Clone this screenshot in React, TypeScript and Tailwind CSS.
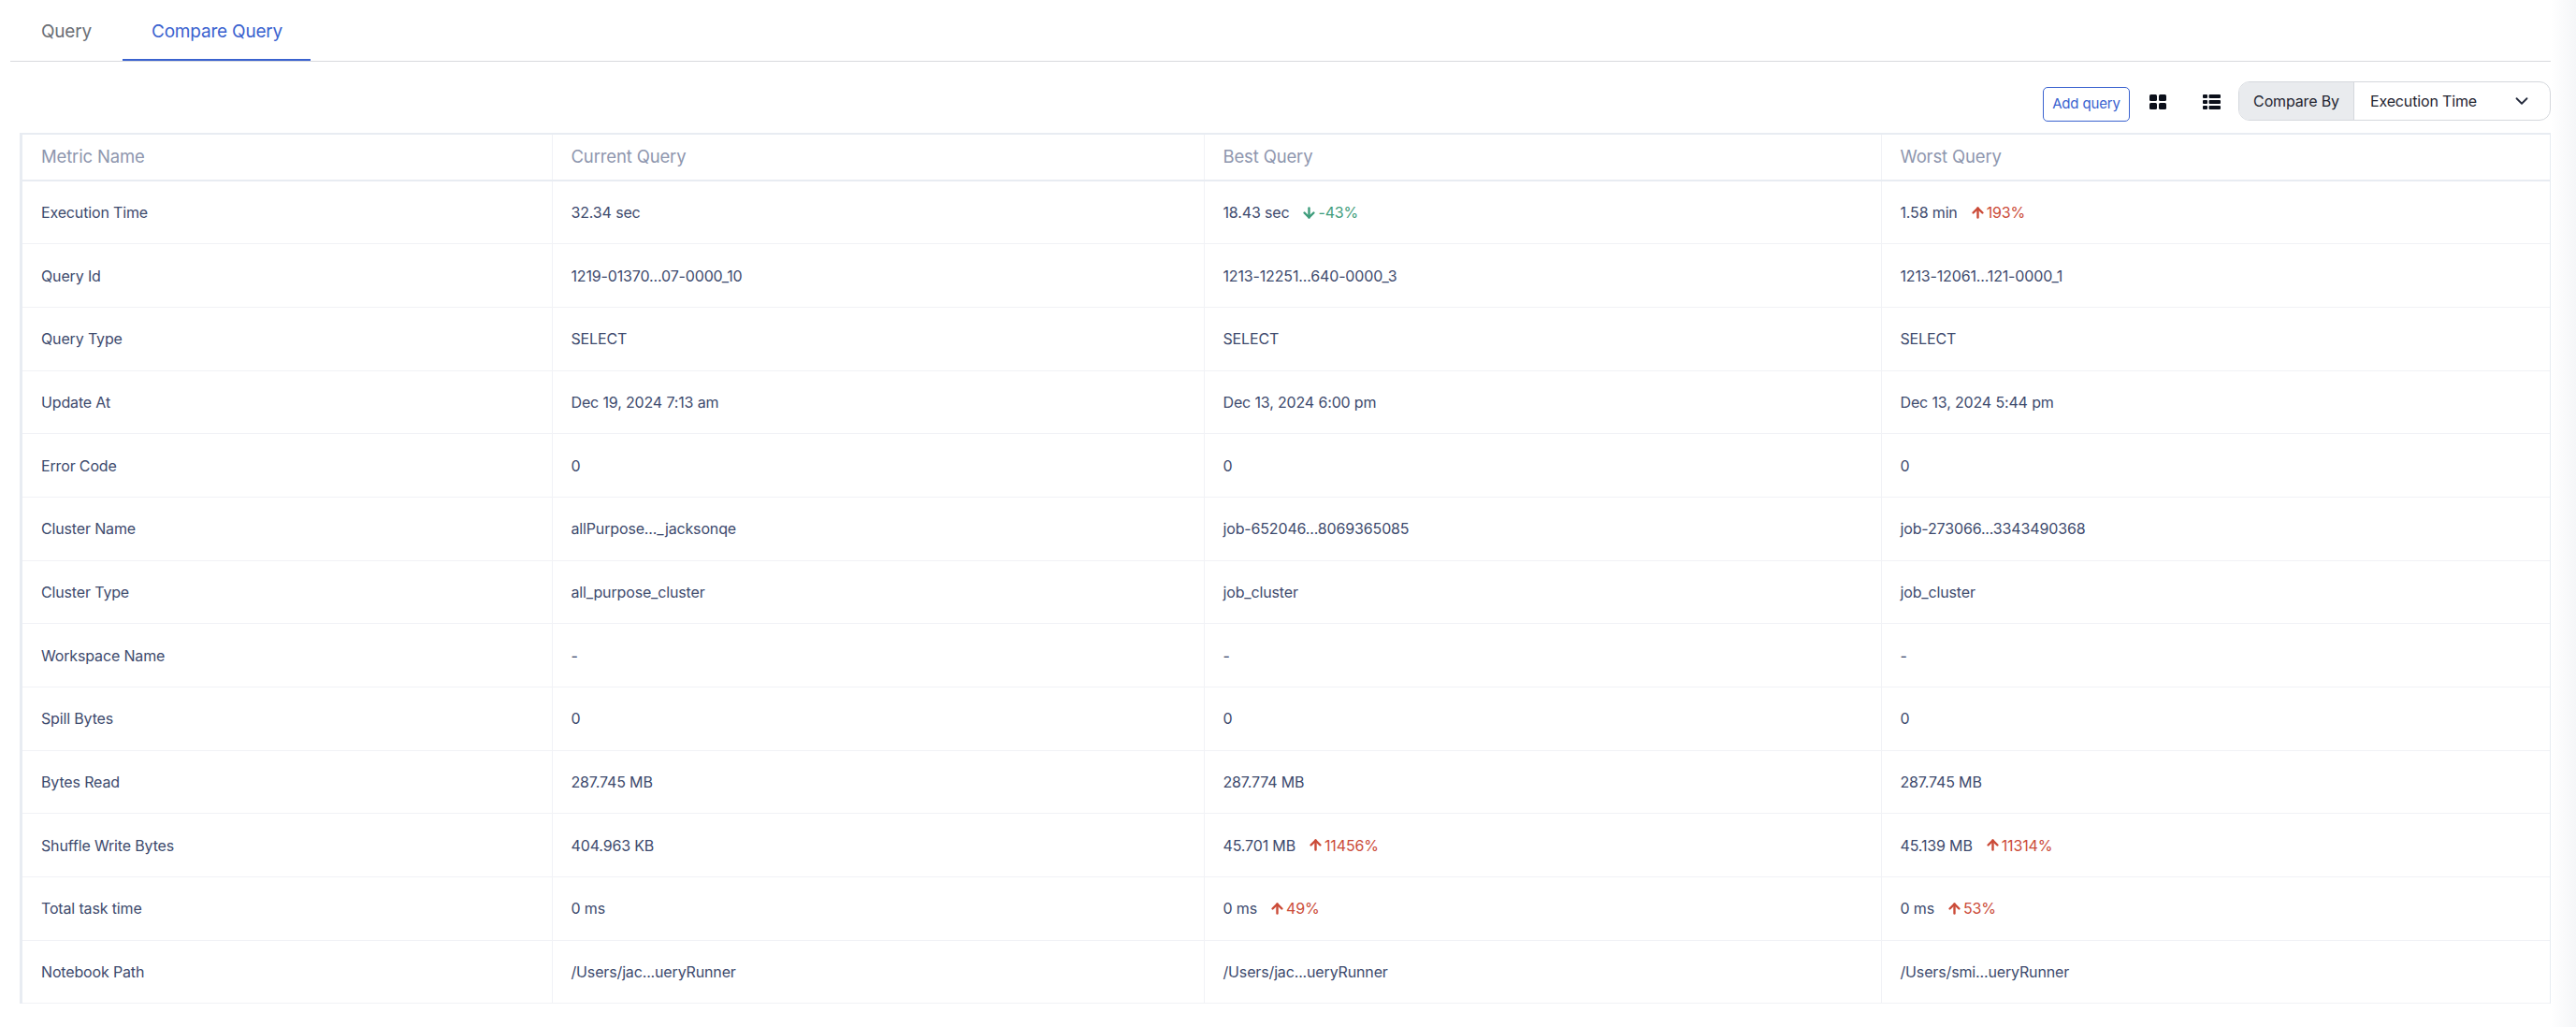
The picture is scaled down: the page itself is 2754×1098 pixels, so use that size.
import React from 'react';
import { ArrowDown, ArrowUp, ChevronDown } from 'lucide-react';

type Delta = { dir: 'up' | 'down'; text: string };
type Cell = { value: string; delta?: Delta };
type Row = { name: string; current: string; best: Cell; worst: Cell };

const rows: Row[] = [
  { name: 'Execution Time', current: '32.34 sec', best: { value: '18.43 sec', delta: { dir: 'down', text: '-43%' } }, worst: { value: '1.58 min', delta: { dir: 'up', text: '193%' } } },
  { name: 'Query Id', current: '1219-01370...07-0000_10', best: { value: '1213-12251...640-0000_3' }, worst: { value: '1213-12061...121-0000_1' } },
  { name: 'Query Type', current: 'SELECT', best: { value: 'SELECT' }, worst: { value: 'SELECT' } },
  { name: 'Update At', current: 'Dec 19, 2024 7:13 am', best: { value: 'Dec 13, 2024 6:00 pm' }, worst: { value: 'Dec 13, 2024 5:44 pm' } },
  { name: 'Error Code', current: '0', best: { value: '0' }, worst: { value: '0' } },
  { name: 'Cluster Name', current: 'allPurpose..._jacksonqe', best: { value: 'job-652046...8069365085' }, worst: { value: 'job-273066...3343490368' } },
  { name: 'Cluster Type', current: 'all_purpose_cluster', best: { value: 'job_cluster' }, worst: { value: 'job_cluster' } },
  { name: 'Workspace Name', current: '-', best: { value: '-' }, worst: { value: '-' } },
  { name: 'Spill Bytes', current: '0', best: { value: '0' }, worst: { value: '0' } },
  { name: 'Bytes Read', current: '287.745 MB', best: { value: '287.774 MB' }, worst: { value: '287.745 MB' } },
  { name: 'Shuffle Write Bytes', current: '404.963 KB', best: { value: '45.701 MB', delta: { dir: 'up', text: '11456%' } }, worst: { value: '45.139 MB', delta: { dir: 'up', text: '11314%' } } },
  { name: 'Total task time', current: '0 ms', best: { value: '0 ms', delta: { dir: 'up', text: '49%' } }, worst: { value: '0 ms', delta: { dir: 'up', text: '53%' } } },
  { name: 'Notebook Path', current: '/Users/jac...ueryRunner', best: { value: '/Users/jac...ueryRunner' }, worst: { value: '/Users/smi...ueryRunner' } },
];

const GridIcon = () => (
  <svg width="18" height="16" viewBox="0 0 18 16" fill="#0b0f1a">
    <rect x="0" y="0" width="8" height="7" rx="1.5" />
    <rect x="10" y="0" width="8" height="7" rx="1.5" />
    <rect x="0" y="9" width="8" height="7" rx="1.5" />
    <rect x="10" y="9" width="8" height="7" rx="1.5" />
  </svg>
);

const ListIcon = () => (
  <svg width="19" height="16" viewBox="0 0 19 16" fill="#0b0f1a">
    <rect x="0" y="0" width="5" height="4" rx="1" />
    <rect x="6.5" y="0" width="12.5" height="4" rx="1" />
    <rect x="0" y="6" width="5" height="4" rx="1" />
    <rect x="6.5" y="6" width="12.5" height="4" rx="1" />
    <rect x="0" y="12" width="5" height="4" rx="1" />
    <rect x="6.5" y="12" width="12.5" height="4" rx="1" />
  </svg>
);

const ValueCell = ({ cell }: { cell: Cell }) => (
  <td className="border-l border-[#f1f2f6] pl-[20px] align-middle">
    <div className="flex items-center">
      <span>{cell.value}</span>
      {cell.delta && (
        <span className={`ml-[13px] flex items-center ${cell.delta.dir === 'up' ? 'text-[#cb4b38]' : 'text-[#3f9d7c]'}`}>
          {cell.delta.dir === 'up' ? <ArrowUp size={17} strokeWidth={3.4} /> : <ArrowDown size={17} strokeWidth={3.4} />}
          <span className="ml-[1px]">{cell.delta.text}</span>
        </span>
      )}
    </div>
  </td>
);

const App: React.FC = () => {
  return (
    <div className="flex h-[1098px] w-[2754px] overflow-hidden bg-white font-['Inter',sans-serif] text-[16px] tracking-[-0.15px] text-[#3d4a6d]">
      <div className="w-[2727px] shrink-0">
        <div className="ml-[11px] flex h-[66px] border-b border-[#d8dadd] text-[19px] tracking-[-0.2px]">
          <div className="w-[120px] pl-[33px] pt-[20px] text-[#6b6f76]">Query</div>
          <div className="w-[201px] border-b-2 border-[#3a62cf] pl-[31px] pt-[20px] text-[#3a62cf]">Compare Query</div>
        </div>

        <div className="flex h-[76px] items-center justify-end pt-[8px]">
          <button className="mt-[6px] h-[37px] w-[93px] rounded-[5px] border border-[#3a62cf] text-[15px] text-[#3a62cf]">Add query</button>
          <div className="ml-[21px] mt-[1px]"><GridIcon /></div>
          <div className="ml-[39px] mt-[1px]"><ListIcon /></div>
          <div className="ml-[19px] flex h-[42px] w-[334px] overflow-hidden rounded-[12px] border border-[#d5d8dd] text-[16px] text-[#1f2430]">
            <div className="flex w-[123px] items-center justify-center border-r border-[#d5d8dd] bg-[#e9ebee]">Compare By</div>
            <div className="flex flex-1 items-center justify-between pl-[17px] pr-[19px]">
              <span>Execution Time</span>
              <ChevronDown size={22} strokeWidth={2} className="text-[#252b3d]" />
            </div>
          </div>
        </div>

        <div className="ml-[21px] w-[2706px] border-l-[3px] border-r border-t-2 border-[#e8ecf2]">
          <table className="w-full table-fixed border-collapse">
            <colgroup>
              <col className="w-[566px]" />
              <col className="w-[697px]" />
              <col className="w-[724px]" />
              <col />
            </colgroup>
            <thead>
              <tr className="h-[49px] border-b-2 border-[#e8ecf2] text-left text-[18.5px] text-[#8e96ae]">
                <th className="pl-[20px] font-normal">Metric Name</th>
                <th className="border-l border-[#f1f2f6] pl-[20px] font-normal">Current Query</th>
                <th className="border-l border-[#f1f2f6] pl-[20px] font-normal">Best Query</th>
                <th className="border-l border-[#f1f2f6] pl-[20px] font-normal">Worst Query</th>
              </tr>
            </thead>
            <tbody>
              {rows.map((row) => (
                <tr key={row.name} className="h-[67.7px] border-b border-[#f1f2f6]">
                  <td className="pl-[20px]">{row.name}</td>
                  <ValueCell cell={{ value: row.current }} />
                  <ValueCell cell={row.best} />
                  <ValueCell cell={row.worst} />
                </tr>
              ))}
            </tbody>
          </table>
        </div>
      </div>
      <div className="flex-1 bg-gradient-to-r from-white to-[#f5f6f8]" />
    </div>
  );
};

export default App;
